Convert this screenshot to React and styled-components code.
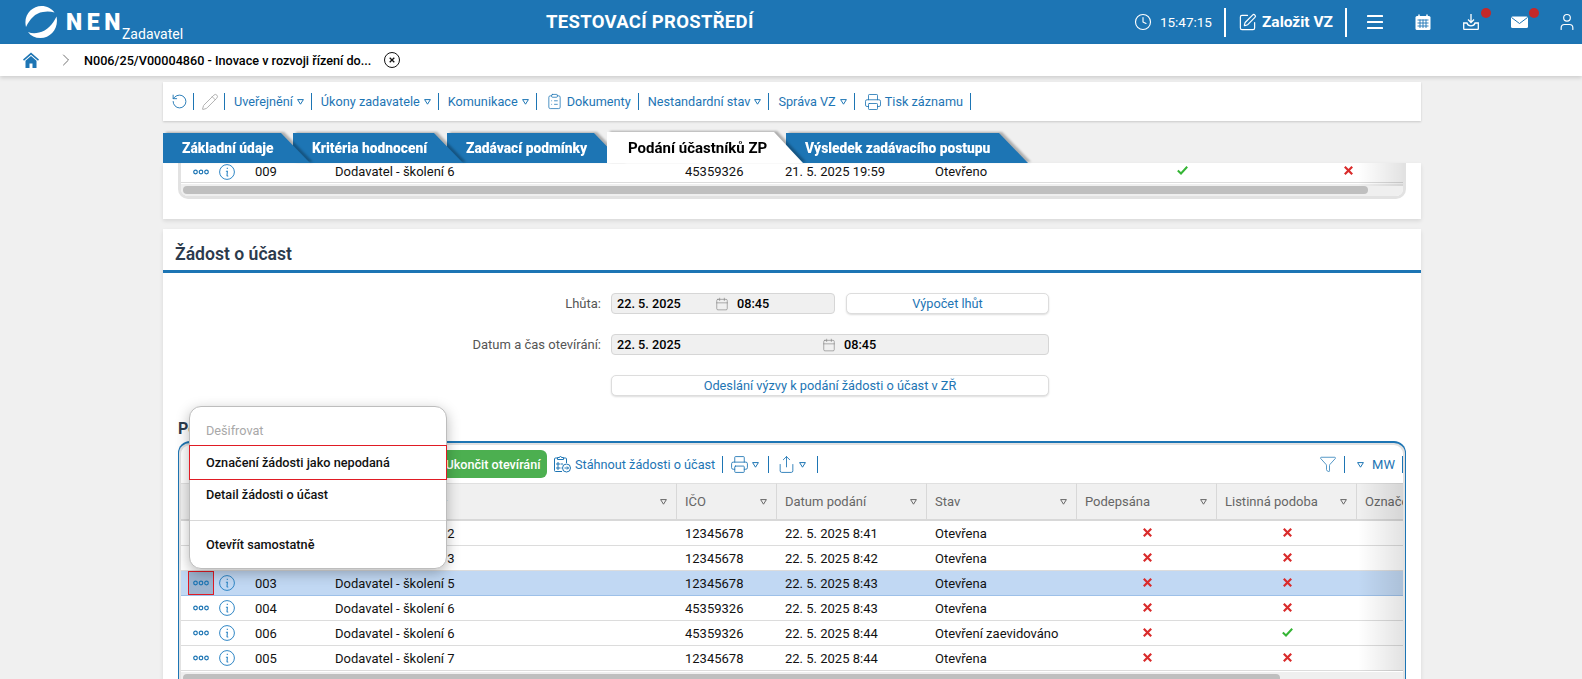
import React from "react"
import styled, { createGlobalStyle } from "styled-components"
import {
  Clock, SquarePen, User, RotateCcw, Pencil, ClipboardList,
  Printer, Share, Funnel, Calendar, ChevronRight,
} from "lucide-react"

const BLUE = "#1d75b4"

const Global = createGlobalStyle`
  html, body {
    margin: 0;
    height: 100%;
    overflow: hidden;
    background: #f0f0f0;
    font-family: Roboto, "Liberation Sans", sans-serif;
    font-size: 13px;
    color: #111;
  }
`

const Page = styled.div`
  position: relative;
  height: 100vh;
  overflow: hidden;
`

/* top blue bar */
const TopBar = styled.header`
  height: 44px;
  background: ${BLUE};
  color: #fff;
  display: flex;
  align-items: center;
`
const Brand = styled.div`
  width: 546px;
  flex: none;
  padding-left: 25px;
  box-sizing: border-box;
  display: flex;
  align-items: center;
`
const BrandName = styled.span`
  font-weight: 900;
  font-size: 23px;
  letter-spacing: 4.6px;
  margin-left: 9px;
`
const BrandRole = styled.span`
  font-size: 14px;
  margin-left: -3px;
  margin-top: 24px;
`
const EnvTitle = styled.div`
  font-weight: 700;
  font-size: 18.5px;
  letter-spacing: 0.3px;
  white-space: nowrap;
`
const TopActions = styled.div`
  margin-left: auto;
  padding-right: 7px;
  display: flex;
  align-items: center;
  height: 100%;
`
const TimeText = styled.span`
  font-size: 13.5px;
  margin-left: 8px;
`
const TopSep = styled.span`
  width: 2px;
  height: 29px;
  background: #fff;
  margin: 0 12px;
`
const FoundLabel = styled.span`
  font-weight: 700;
  font-size: 15.5px;
  margin-left: 5px;
`
const TopIcons = styled.div`
  display: flex;
  align-items: center;
  gap: 32px;
  margin-left: 8px;
`
const IconSlot = styled.span`
  position: relative;
  display: flex;
  align-items: center;
  justify-content: center;
  width: 16px;
  height: 16px;
  svg {
    flex: none;
  }
`
const Badge = styled.span`
  position: absolute;
  top: -6px;
  left: 18px;
  width: 10px;
  height: 10px;
  border-radius: 50%;
  background: #c62828;
`

/* breadcrumb */
const Crumbs = styled.nav`
  height: 32px;
  background: #fff;
  box-shadow: 0 2px 4px rgba(0, 0, 0, 0.14);
  display: flex;
  align-items: center;
  padding-left: 23px;
  position: relative;
`
const CrumbChevron = styled(ChevronRight)`
  margin-left: 17px;
`
const CrumbText = styled.span`
  font-weight: 500;
  font-size: 12.65px;
  color: #000;
  margin: 0 13px 0 8px;
`

/* page column */
const Column = styled.main`
  width: 1258px;
  margin: 6px 0 0 163px;
`
const ActionBar = styled.div`
  height: 39px;
  background: #fff;
  box-shadow: 0 1px 2px rgba(0, 0, 0, 0.16);
  display: flex;
  align-items: center;
  padding-left: 8px;
  color: ${BLUE};
  font-size: 12.7px;
`
const Sep = styled.span`
  flex: none;
  width: 1px;
  height: 17px;
  background: ${BLUE};
  margin-left: ${p => p.$l ?? 7}px;
  margin-right: ${p => p.$r ?? 9}px;
`
const ActionItem = styled.span`
  display: flex;
  align-items: center;
  white-space: nowrap;
  gap: ${p => p.$gap || 0}px;
  margin-left: ${p => p.$ml || 0}px;
  margin-right: ${p => p.$mr || 0}px;
`
const Caret = styled.svg`
  flex: none;
  width: 7px;
  height: 6px;
  margin-left: ${p => p.$ml ?? 4}px;
  margin-top: 1px;
  color: ${p => p.$color || "inherit"};
`

/* tabs */
const TabRow = styled.div`
  display: flex;
  align-items: flex-end;
  height: 31px;
  margin-top: 11px;
`
const Tab = styled.div`
  flex: none;
  position: relative;
  width: ${p => p.$w}px;
  margin-right: ${p => p.$overlap}px;
  z-index: ${p => p.$z};
  filter: drop-shadow(3px -1px 1px rgba(0, 0, 0, 0.28));
`
const TabFace = styled.div`
  height: ${p => (p.$active ? 31 : 30)}px;
  box-sizing: border-box;
  padding-left: ${p => (p.$active ? 21 : 19)}px;
  display: flex;
  align-items: center;
  background: ${p => (p.$active ? "#fff" : BLUE)};
  color: ${p => (p.$active ? "#000" : "#fff")};
  font-weight: ${p => (p.$active ? 700 : 900)};
  font-size: ${p => (p.$active ? 15 : 13.8)}px;
  white-space: nowrap;
  clip-path: polygon(0 0, calc(100% - 29px) 0, 100% 100%, 0 100%);
`

/* cards */
const Card = styled.section`
  background: #fff;
  box-shadow: 0 2px 4px rgba(0, 0, 0, 0.1);
  position: relative;
`
const TopCard = styled(Card)`
  height: 56px;
  padding: 0 15px;
`
const ClosedFrame = styled.div`
  width: 1222px;
  height: 33px;
  border: 3px solid #e2e2e2;
  border-top: 0;
  border-radius: 0 0 10px 10px;
  overflow: hidden;
  position: relative;
`
const MainCard = styled(Card)`
  margin-top: 10px;
  height: 460px;
`
const CardTitle = styled.h2`
  margin: 0;
  height: 44px;
  box-sizing: border-box;
  padding: 14px 0 0 12px;
  border-bottom: 3px solid ${BLUE};
  font-size: 17.6px;
  line-height: 22px;
  font-weight: 600;
  color: #2c3b4d;
`

/* form */
const Form = styled.div`
  padding-top: 20px;
  display: flex;
  flex-direction: column;
  gap: 20px;
`
const FormRow = styled.div`
  display: flex;
  align-items: center;
  height: 21px;
`
const FormLabel = styled.label`
  width: 438px;
  flex: none;
  margin-right: 10px;
  text-align: right;
  color: #555;
  font-size: 13px;
`
const Field = styled.div`
  width: ${p => p.$w}px;
  height: 21px;
  box-sizing: border-box;
  flex: none;
  background: #f0f0f0;
  border: 1px solid #d6d6d6;
  border-radius: 4px;
  display: grid;
  grid-template-columns: 1fr 1fr;
  align-items: center;
  font-weight: 500;
  font-size: 12.7px;
  color: #000;
`
const DatePart = styled.span`
  display: flex;
  justify-content: space-between;
  align-items: center;
  padding-left: 5px;
  margin-right: -6px;
  color: #000;
`
const TimePart = styled.span`
  padding-left: 14px;
`
const FormButton = styled.button`
  width: ${p => p.$w}px;
  height: 21px;
  margin-left: ${p => p.$ml || 0}px;
  flex: none;
  background: #fff;
  border: 1px solid #ddd;
  border-radius: 5px;
  box-shadow: 0 1px 2px rgba(0, 0, 0, 0.14);
  color: ${BLUE};
  font: 400 12.75px Roboto, sans-serif;
  padding: 0;
`

/* table */
const SubTitle = styled.h3`
  margin: 23px 0 2px 15px;
  font-size: 16px;
  line-height: 20px;
  font-weight: 700;
  color: #2c3b4d;
`
const Frame = styled.div`
  margin-left: 15px;
  width: 1228px;
  height: 240px;
  box-sizing: border-box;
  border: 1px solid ${BLUE};
  border-top-width: 2px;
  border-bottom: 0;
  border-radius: 12px 12px 0 0;
  background: #e2e2e2;
  padding: 2px 2px 0 2px;
`
const FrameInner = styled.div`
  height: 100%;
  background: #fff;
  border-radius: 9px 9px 0 0;
  overflow: hidden;
  position: relative;
`
const TableTools = styled.div`
  height: 38px;
  display: flex;
  align-items: center;
  color: ${BLUE};
  font-size: 12.7px;
`
const GreenButton = styled.button`
  margin: 0 7px 0 252px;
  height: 28px;
  width: 114px;
  flex: none;
  background: #4caf50;
  border: 0;
  border-radius: 6px;
  color: #fff;
  font: 500 12.6px Roboto, sans-serif;
  padding: 0 0 0 6px;
`
const ToolsEnd = styled.div`
  margin-left: auto;
  display: flex;
  align-items: center;
  font-size: 13px;
`
const Grid = styled.div`
  display: grid;
  grid-template-columns: ${p => p.$cols};
  width: max-content;
`
const HeadCell = styled.div`
  height: 38px;
  box-sizing: border-box;
  padding: 0 9px 0 8px;
  display: flex;
  align-items: center;
  justify-content: space-between;
  background: #f0f0f0;
  border-top: 1px solid #e0e0e0;
  border-right: 1px solid #d8d8d8;
  border-bottom: 2px solid #d8d8d8;
  color: #666;
  white-space: nowrap;
  overflow: hidden;
`
const HeadText = styled.span`
  display: flex;
  align-items: center;
  gap: 5px;
`
const Cell = styled.div`
  height: ${p => p.$h || 25}px;
  box-sizing: border-box;
  padding: 0 8px ${p => (p.$h ? 2 : 0)}px;
  display: flex;
  align-items: center;
  justify-content: ${p => (p.$center ? "center" : "flex-start")};
  background: ${p => (p.$selected ? "#c1d8f3" : "#fff")};
  border-bottom: 1px solid ${p => (p.$selected ? "#9dc0e8" : "#dcdcdc")};
  white-space: nowrap;
`
const ActionCell = styled(Cell)`
  padding: 0 0 ${p => (p.$h ? 2 : 0)}px 7px;
  gap: 5px;
`
const DotsButton = styled.span`
  width: 26px;
  height: 24px;
  box-sizing: border-box;
  flex: none;
  display: flex;
  align-items: center;
  justify-content: center;
  border: 1px solid ${p => (p.$open ? "#e01b24" : "transparent")};
  background: ${p => (p.$open ? "#9db4cf" : "transparent")};
`
const Mark = styled.svg`
  flex: none;
  margin-bottom: 2px;
`
const Fade = styled.div`
  position: absolute;
  top: ${p => p.$top}px;
  right: 0;
  bottom: 10px;
  width: 45px;
  background: linear-gradient(to right, rgba(0, 0, 0, 0), rgba(0, 0, 0, 0.11));
  pointer-events: none;
`
const Track = styled.div`
  height: 10px;
  margin-top: 1px;
  background: #efefef;
  padding: 2px 0 0 2px;
`
const Thumb = styled.div`
  width: ${p => p.$w}px;
  height: 8px;
  border-radius: 4px;
  background: #bfbfbf;
`

/* context menu */
const ContextMenu = styled.div`
  position: absolute;
  left: 189px;
  top: 406px;
  width: 258px;
  height: 163px;
  box-sizing: border-box;
  background: #fff;
  border: 1px solid #bdbdbd;
  border-radius: 12px;
  box-shadow: 0 4px 14px rgba(0, 0, 0, 0.28);
  padding-top: 6px;
  display: flex;
  flex-direction: column;
  font-size: 12.7px;
  z-index: 5;
`
const MenuItem = styled.div`
  height: ${p => p.$h}px;
  flex: none;
  box-sizing: border-box;
  display: flex;
  align-items: center;
  padding: ${p => p.$pt || 0}px 0 ${p => p.$pb || 0}px 16px;
  margin: 0 -1px;
  font-weight: ${p => (p.$disabled ? 400 : 500)};
  color: ${p => (p.$disabled ? "#a8a8a8" : "#111")};
  border: 1px solid ${p => (p.$hot ? "#e01b24" : "transparent")};
`
const MenuRule = styled.div`
  height: 1px;
  flex: none;
  background: #d8d8d8;
  margin-top: 10px;
`

function Logo() {
  return (
    <svg width="32" height="32" viewBox="0 0 32 32" fill="#fff">
      <path d="M1 21C-2 9 7 0 16.500 0c5.500 0 10 2.500 13 6.500-3.500-1-7.500-1.500-11.500-.5C10 7 5 13 1 21Z" />
      <path d="M31.500 10.500C34 22 26 32 15.500 32c-5.500 0-9.500-2-12.500-6 3.500 1.500 7.500 1.500 11 .5 8-1.500 14-8.500 17.500-16Z" />
    </svg>
  )
}

function HomeIcon() {
  return (
    <svg width="16" height="16" viewBox="0 0 16 16" fill={BLUE}>
      <path d="M8 .5 0 7.500l1 1.200L8 2.700l7 6 1-1.200Z" />
      <path d="M8 4 2.500 8.700V16h4v-4.500h3V16h4V8.700Z" />
    </svg>
  )
}

function BurgerIcon() {
  return (
    <svg width="16" height="14" viewBox="0 0 16 14" fill="#fff">
      <rect y="0" width="16" height="2" rx="0.500" />
      <rect y="6" width="16" height="2" rx="0.500" />
      <rect y="12" width="16" height="2" rx="0.500" />
    </svg>
  )
}

function CalendarFilled() {
  return (
    <svg width="16" height="16" viewBox="0 0 16 16">
      <rect x="0.500" y="2" width="15" height="14" rx="1.500" fill="#fff" />
      <path d="M4 .500v3M12 .500v3" stroke="#fff" strokeWidth="1.500" />
      <path d="M2.500 6h11M2.500 9h11M2.500 12h11M5 5.500v8.500M8 5.500v8.500M11 5.500v8.500" stroke={BLUE} strokeWidth="0.900" />
    </svg>
  )
}

function DownloadIcon() {
  return (
    <svg width="16" height="16" viewBox="0 0 16 16" fill="none" stroke="#fff" strokeWidth="1.300">
      <path d="M8 0v8M5 5.500 8 8.500l3-3" />
      <path d="M4 9H.700v5.500a1 1 0 0 0 1 1h12.600a1 1 0 0 0 1-1V9H12c-.5 2-2 2.800-4 2.800S4.500 11 4 9Z" />
    </svg>
  )
}

function MailIcon() {
  return (
    <svg width="17" height="16" viewBox="0 0 17 16">
      <rect x="0" y="2.500" width="17" height="11.500" rx="1.500" fill="#fff" />
      <path d="M.5 3.500 8.500 9.500l8-6" fill="none" stroke={BLUE} strokeWidth="1" />
    </svg>
  )
}

function Down({ ml, color }) {
  return (
    <Caret $ml={ml} $color={color} viewBox="0 0 7 6">
      <path d="M.6.6h5.800L3.500 5.200Z" fill="none" stroke="currentColor" strokeWidth="1" />
    </Caret>
  )
}

function Dots() {
  return (
    <svg width="16" height="6" viewBox="0 0 16 6" fill="none" stroke={BLUE} strokeWidth="1.200">
      <circle cx="2.500" cy="3" r="1.800" />
      <circle cx="8" cy="3" r="1.800" />
      <circle cx="13.500" cy="3" r="1.800" />
    </svg>
  )
}

function InfoIcon() {
  return (
    <svg width="16" height="16" viewBox="0 0 16 16" fill="none" stroke="#2f86c5" strokeWidth="1">
      <circle cx="8" cy="8" r="7.400" />
      <path d="M8.300 3.800v1.300M6.900 7.200h1.500l-.4 4.300c0 .6.600.6 1.200.2" strokeWidth="1.100" />
    </svg>
  )
}

function Cross() {
  return (
    <Mark width="9" height="9" viewBox="0 0 9 9" stroke="#d92b2b" strokeWidth="2.200">
      <path d="M.8.8l7.400 7.400M8.200.8.800 8.200" />
    </Mark>
  )
}

function Tick() {
  return (
    <Mark width="11" height="9" viewBox="0 0 11 9" fill="none" stroke="#35b535" strokeWidth="2">
      <path d="M.8 4.500 4 7.500 10.200.8" />
    </Mark>
  )
}

function DownloadDoc() {
  return (
    <svg width="17" height="18" viewBox="0 0 17 18" fill="none" stroke={BLUE} strokeWidth="1">
      <path d="M8 16.500H1.500a1 1 0 0 1-1-1V4a1 1 0 0 1 1-1h2M9.500 3h2a1 1 0 0 1 1 1v4" />
      <path d="M3.500 4.500V2.500h2a1 1 0 0 1 2 0h2v2Z" />
      <path d="M3 8h2v2H3ZM3 12h2v2H3ZM6.500 9h2.500M6.500 13h1" />
      <circle cx="12.500" cy="13" r="4" />
      <path d="M10.500 13h4M13 11.500l1.500 1.500L13 14.500" />
    </svg>
  )
}

const tabs = [
  { label: "Základní údaje", w: 147, overlap: -17, z: 5 },
  { label: "Kritéria hodnocení", w: 170, overlap: -16, z: 4 },
  { label: "Zadávací podmínky", w: 176, overlap: -16, z: 3 },
  { label: "Podání účastníků ZP", w: 196, overlap: -17, z: 6, active: true },
  { label: "Výsledek zadávacího postupu", w: 242, overlap: 0, z: 1 },
]

const COLS = "66px 80px 350px 100px 150px 150px 140px 140px 140px"
const TOP_COLS = "66px 80px 350px 100px 150px 150px 210px 122px"

const heads = ["", "Číslo", "Název dodavatele", "IČO", "Datum podání", "Stav", "Podepsána", "Listinná podoba", "Označení"]

const rows = [
  { no: "001", name: "Dodavatel - školení 2", ico: "12345678", date: "22. 5. 2025 8:41", state: "Otevřena" },
  { no: "002", name: "Dodavatel - školení 3", ico: "12345678", date: "22. 5. 2025 8:42", state: "Otevřena" },
  { no: "003", name: "Dodavatel - školení 5", ico: "12345678", date: "22. 5. 2025 8:43", state: "Otevřena", selected: true },
  { no: "004", name: "Dodavatel - školení 6", ico: "45359326", date: "22. 5. 2025 8:43", state: "Otevřena" },
  { no: "006", name: "Dodavatel - školení 6", ico: "45359326", date: "22. 5. 2025 8:44", state: "Otevření zaevidováno", paper: true },
  { no: "005", name: "Dodavatel - školení 7", ico: "12345678", date: "22. 5. 2025 8:44", state: "Otevřena" },
]

function Actions({ selected, h }) {
  return (
    <ActionCell $selected={selected} $h={h}>
      <DotsButton $open={selected}><Dots /></DotsButton>
      <InfoIcon />
    </ActionCell>
  )
}

export default function App() {
  return (
    <Page>
      <Global />
      <TopBar>
        <Brand>
          <Logo />
          <BrandName>NEN</BrandName>
          <BrandRole>Zadavatel</BrandRole>
        </Brand>
        <EnvTitle>TESTOVACÍ PROSTŘEDÍ</EnvTitle>
        <TopActions>
          <Clock size={18} strokeWidth={1.5} />
          <TimeText>15:47:15</TimeText>
          <TopSep />
          <SquarePen size={19} strokeWidth={1.5} />
          <FoundLabel>Založit VZ</FoundLabel>
          <TopSep />
          <TopIcons>
            <IconSlot><BurgerIcon /></IconSlot>
            <IconSlot><CalendarFilled /></IconSlot>
            <IconSlot><DownloadIcon /><Badge /></IconSlot>
            <IconSlot><MailIcon /><Badge /></IconSlot>
            <IconSlot><User size={20} strokeWidth={1.4} /></IconSlot>
          </TopIcons>
        </TopActions>
      </TopBar>

      <Crumbs>
        <HomeIcon />
        <CrumbChevron size={20} strokeWidth={1} color="#555" />
        <CrumbText>N006/25/V00004860 - Inovace v rozvoji řízení do...</CrumbText>
        <svg width="16" height="16" viewBox="0 0 16 16" fill="none" stroke="#111" strokeWidth="1">
          <circle cx="8" cy="8" r="7.500" />
          <path d="M5.700 5.700l4.600 4.600M10.300 5.700l-4.600 4.600" strokeWidth="1.300" />
        </svg>
      </Crumbs>

      <Column>
        <ActionBar>
          <RotateCcw size={17} strokeWidth={1.3} />
          <Sep $l={5} $r={7} />
          <Pencil size={18} strokeWidth={1} color="#999" />
          <Sep $l={5} />
          <ActionItem>Uveřejnění<Down /></ActionItem>
          <Sep />
          <ActionItem>Úkony zadavatele<Down /></ActionItem>
          <Sep />
          <ActionItem>Komunikace<Down /></ActionItem>
          <Sep />
          <ActionItem $gap={4}><ClipboardList size={17} strokeWidth={1.1} />Dokumenty</ActionItem>
          <Sep />
          <ActionItem>Nestandardní stav<Down /></ActionItem>
          <Sep />
          <ActionItem>Správa VZ<Down /></ActionItem>
          <Sep />
          <ActionItem $gap={3}><Printer size={18} strokeWidth={1.1} />Tisk záznamu</ActionItem>
          <Sep />
        </ActionBar>

        <TabRow>
          {tabs.map(t => (
            <Tab key={t.label} $w={t.w} $overlap={t.overlap} $z={t.z}>
              <TabFace $active={t.active}>{t.label}</TabFace>
            </Tab>
          ))}
        </TabRow>

        <TopCard>
          <ClosedFrame>
            <Grid $cols={TOP_COLS}>
              <Actions h={20} />
              <Cell $h={20}>009</Cell>
              <Cell $h={20}>Dodavatel - školení 6</Cell>
              <Cell $h={20}>45359326</Cell>
              <Cell $h={20}>21. 5. 2025 19:59</Cell>
              <Cell $h={20}>Otevřeno</Cell>
              <Cell $h={20} $center><Tick /></Cell>
              <Cell $h={20} $center><Cross /></Cell>
            </Grid>
            <Track><Thumb $w={1185} /></Track>
            <Fade $top={0} />
          </ClosedFrame>
        </TopCard>

        <MainCard>
          <CardTitle>Žádost o účast</CardTitle>
          <Form>
            <FormRow>
              <FormLabel>Lhůta:</FormLabel>
              <Field $w={224}>
                <DatePart>22. 5. 2025<Calendar size={14} strokeWidth={1} color="#777" /></DatePart>
                <TimePart>08:45</TimePart>
              </Field>
              <FormButton $w={203} $ml={11}>Výpočet lhůt</FormButton>
            </FormRow>
            <FormRow>
              <FormLabel>Datum a čas otevírání:</FormLabel>
              <Field $w={438}>
                <DatePart>22. 5. 2025<Calendar size={14} strokeWidth={1} color="#777" /></DatePart>
                <TimePart>08:45</TimePart>
              </Field>
            </FormRow>
            <FormRow>
              <FormLabel />
              <FormButton $w={438}>Odeslání výzvy k podání žádosti o účast v ZŘ</FormButton>
            </FormRow>
          </Form>

          <SubTitle>Podané žádosti o účast</SubTitle>
          <Frame>
            <FrameInner>
              <TableTools>
                <GreenButton>Ukončit otevírání</GreenButton>
                <ActionItem $gap={4}><DownloadDoc />Stáhnout žádosti o účast</ActionItem>
                <Sep $r={7} />
                <ActionItem><Printer size={19} strokeWidth={1.1} /><Down ml={3} /></ActionItem>
                <Sep $l={9} $r={8} />
                <ActionItem><Share size={19} strokeWidth={1.1} /><Down ml={3} /></ActionItem>
                <Sep $l={11} />
                <ToolsEnd>
                  <Funnel size={18} strokeWidth={1} />
                  <Sep $l={7} $r={12} />
                  <Down ml={0} />
                  <ActionItem $ml={8} $mr={7}>MW</ActionItem>
                  <Sep $l={0} $r={0} />
                </ToolsEnd>
              </TableTools>
              <Grid $cols={COLS}>
                {heads.map((h, i) => (
                  <HeadCell key={i}>
                    <HeadText>
                      {h}
                      {i === 2 && <span>↑</span>}
                    </HeadText>
                    {i > 0 && <Down ml={0} color="#666" />}
                  </HeadCell>
                ))}
                {rows.map(r => (
                  <React.Fragment key={r.no}>
                    <Actions selected={r.selected} />
                    <Cell $selected={r.selected}>{r.no}</Cell>
                    <Cell $selected={r.selected}>{r.name}</Cell>
                    <Cell $selected={r.selected}>{r.ico}</Cell>
                    <Cell $selected={r.selected}>{r.date}</Cell>
                    <Cell $selected={r.selected}>{r.state}</Cell>
                    <Cell $selected={r.selected} $center><Cross /></Cell>
                    <Cell $selected={r.selected} $center>{r.paper ? <Tick /> : <Cross />}</Cell>
                    <Cell $selected={r.selected} />
                  </React.Fragment>
                ))}
              </Grid>
              <Track><Thumb $w={1097} /></Track>
              <Fade $top={38} />
            </FrameInner>
          </Frame>
        </MainCard>
      </Column>

      <ContextMenu>
        <MenuItem $h={32} $pt={2} $disabled>Dešifrovat</MenuItem>
        <MenuItem $h={35} $hot>Označení žádosti jako nepodaná</MenuItem>
        <MenuItem $h={30} $pb={2}>Detail žádosti o účast</MenuItem>
        <MenuRule />
        <MenuItem $h={46}>Otevřít samostatně</MenuItem>
      </ContextMenu>
    </Page>
  )
}
